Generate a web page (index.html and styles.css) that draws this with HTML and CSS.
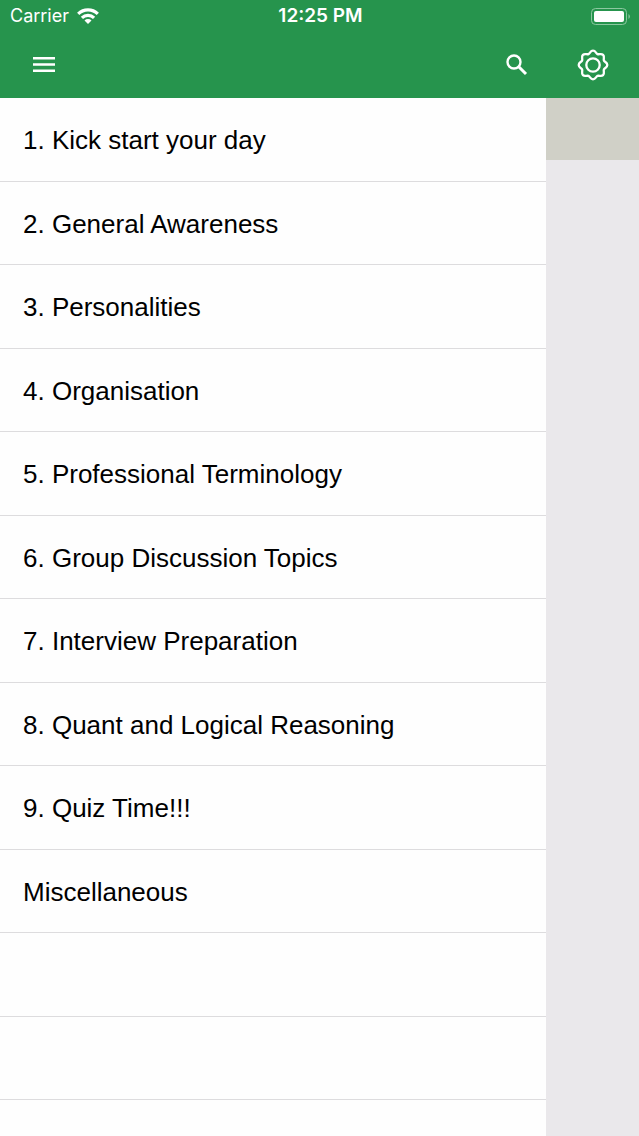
FILE: index.html
```html
<!DOCTYPE html>
<html lang="en">
<head>
    <meta charset="UTF-8">
    <meta name="viewport" content="width=device-width, initial-scale=1.0">
    <title>Topics</title>
    <link rel="stylesheet" href="styles.css">
</head>
<body>
    <header class="top">
        <!-- Status bar -->
        <div class="status-bar">
            <div class="carrier">
                <span>Carrier</span>
                <svg width="22" height="16" viewBox="0 0 22 16" fill="none" stroke="#fff" stroke-width="3.200" aria-hidden="true">
                    <path d="M1.200 5.800a14 14 0 0 1 19.600 0"/>
                    <path d="M4.900 9.900a8.800 8.800 0 0 1 12.200 0"/>
                    <path d="M11 16l-3.500-3.500a5 5 0 0 1 7 0z" fill="#fff" stroke="none"/>
                </svg>
            </div>
            <time class="clock">12:25 PM</time>
            <svg class="battery" width="40" height="17" viewBox="0 0 40 17" aria-hidden="true">
                <rect x="0.5" y="0.5" width="35" height="16" rx="4" fill="none" stroke="#8cc8a0"/>
                <rect x="3" y="3" width="30" height="11" rx="2" fill="#fff"/>
                <path d="M37.5 6a3 3 0 0 1 0 5z" fill="#8cc8a0"/>
            </svg>
        </div>

        <!-- Toolbar -->
        <div class="toolbar">
            <button class="icon-btn" type="button" aria-label="Menu">
                <svg width="24" height="16" viewBox="0 0 24 16" fill="#fff">
                    <path d="M1 0h22v2.500H1zM1 6.200h22v2.500H1zM1 12.400h22v2.500H1z"/>
                </svg>
            </button>
            <div class="actions">
                <button class="icon-btn" type="button" aria-label="Search">
                    <svg width="22" height="22" viewBox="0 0 22 22" fill="none" stroke="#fff">
                        <circle cx="8" cy="8" r="6.500" stroke-width="2.400"/>
                        <path d="M12.500 12.500l7.500 7.500" stroke-width="3"/>
                    </svg>
                </button>
                <button class="icon-btn" type="button" aria-label="Settings">
                    <svg width="32" height="32" viewBox="-16 -16 32 32" fill="none" stroke="#fff" stroke-width="2.300">
                        <path d="M0-14.300C2.600-14.300 2.900-11.600 4.500-10.900C6.200-10.200 8.300-11.900 10.100-10.100C11.900-8.300 10.200-6.200 10.900-4.500C11.600-2.900 14.300-2.600 14.300 0C14.300 2.600 11.600 2.900 10.900 4.500C10.200 6.200 11.900 8.300 10.100 10.100C8.300 11.900 6.200 10.200 4.500 10.900C2.900 11.600 2.600 14.300 0 14.300C-2.600 14.300-2.900 11.600-4.500 10.900C-6.200 10.200-8.300 11.900-10.100 10.100C-11.900 8.300-10.200 6.200-10.900 4.500C-11.600 2.900-14.300 2.600-14.300 0C-14.300-2.600-11.600-2.900-10.900-4.500C-10.200-6.200-11.900-8.300-10.100-10.100C-8.300-11.900-6.200-10.200-4.500-10.900C-2.900-11.600-2.600-14.300 0-14.300Z"/>
                        <circle r="6.700"/>
                    </svg>
                </button>
            </div>
        </div>
    </header>

    <main class="content">
        <!-- Side menu -->
        <nav class="drawer">
            <a class="item" href="#">1. Kick start your day</a>
            <a class="item" href="#">2. General Awareness</a>
            <a class="item" href="#">3. Personalities</a>
            <a class="item" href="#">4. Organisation</a>
            <a class="item" href="#">5. Professional Terminology</a>
            <a class="item" href="#">6. Group Discussion Topics</a>
            <a class="item" href="#">7. Interview Preparation</a>
            <a class="item" href="#">8. Quant and Logical Reasoning</a>
            <a class="item" href="#">9. Quiz Time!!!</a>
            <a class="item" href="#">Miscellaneous</a>
            <div class="item"></div>
            <div class="item"></div>
            <div class="drawer-end"></div>
        </nav>

        <!-- Dimmed page behind the menu -->
        <div class="page">
            <div class="page-banner"></div>
        </div>
    </main>
</body>
</html>
```
FILE: styles.css
```css
* {
    box-sizing: border-box;
    margin: 0;
    padding: 0;
}

:root {
    --green: #26944d;
    --line: #dddcde;
    --page: #eae8eb;
    --banner: #d0d0c7;
}

body {
    display: flex;
    flex-direction: column;
    min-height: 100vh;
    font-family: "Liberation Sans", Arial, sans-serif;
    background: var(--page);
}

.top {
    background: var(--green);
    color: #fff;
}

.status-bar {
    display: grid;
    grid-template-columns: 1fr auto 1fr;
    align-items: center;
    height: 32px;
    padding: 0 8px 0 10px;
    font-family: Inter, sans-serif;
    font-size: 18px;
    line-height: 24px;
}

.carrier {
    display: flex;
    align-items: center;
    gap: 8px;
}

.clock {
    font-size: 19px;
    font-weight: 600;
}

.battery {
    justify-self: end;
}

.toolbar {
    display: flex;
    align-items: center;
    justify-content: space-between;
    height: 66px;
    padding: 0 22px 0 20px;
}

.actions {
    display: flex;
    gap: 28px;
}

.icon-btn {
    display: flex;
    align-items: center;
    justify-content: center;
    width: 48px;
    height: 48px;
    border: none;
    background: none;
    cursor: pointer;
}

.content {
    display: flex;
    flex: 1;
}

.drawer {
    display: flex;
    flex-direction: column;
    width: 85.5%;
    background: #fefefe;
}

.item {
    display: flex;
    flex: 1;
    align-items: center;
    min-height: 56px;
    padding: 2px 23px 0;
    border-bottom: 1px solid var(--line);
    color: #000;
    font-size: 26px;
    line-height: 32px;
    text-decoration: none;
}

.drawer-end {
    height: 36px;
}

.page {
    flex: 1;
}

.page-banner {
    height: 62px;
    background: var(--banner);
}
```
